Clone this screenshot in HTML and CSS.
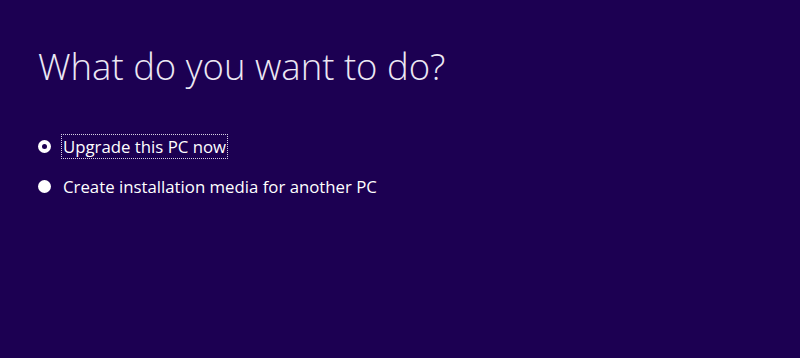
FILE: index.html
```html
<!DOCTYPE html>
<html lang="en">
<head>
<meta charset="utf-8">
<title>What do you want to do?</title>
<link rel="stylesheet" href="styles.css">
</head>
<body>
<main class="page">
  <h1 class="title">What do you want to do?</h1>
  <div class="options">
    <label class="option">
      <span class="radio checked"></span>
      <span class="label focused">Upgrade this PC now</span>
    </label>
    <label class="option">
      <span class="radio"></span>
      <span class="label">Create installation media for another PC</span>
    </label>
  </div>
</main>
</body>
</html>
```

FILE: styles.css
```css
html, body {
  margin: 0;
  padding: 0;
  background: #1c0052;
  width: 800px;
  height: 358px;
  overflow: hidden;
}

.page {
  padding: 42px 0 0 38px;
  font-family: "Open Sans", "Noto Sans", sans-serif;
  color: #ffffff;
}

.title {
  margin: 0;
  font-family: "Open Sans", "Noto Sans", sans-serif;
  font-weight: 300;
  font-size: 36.5px;
  line-height: 48px;
  color: #ece8f4;
  letter-spacing: 0;
}

.options {
  display: flex;
  flex-direction: column;
  gap: 15px;
  margin-top: 44px;
}

.option {
  display: flex;
  align-items: center;
  gap: 10px;
  height: 25px;
}

.radio {
  width: 13px;
  height: 13px;
  border-radius: 50%;
  background: #ffffff;
  display: flex;
  align-items: center;
  justify-content: center;
  flex: none;
}

.radio.checked::after {
  content: "";
  width: 5px;
  height: 5px;
  border-radius: 50%;
  background: #1c0052;
}

.label {
  font-size: 16.8px;
  line-height: 21px;
  padding: 1px;
  border: 1px dotted transparent;
}

.label.focused {
  border-color: #d8d2e6;
}
```
